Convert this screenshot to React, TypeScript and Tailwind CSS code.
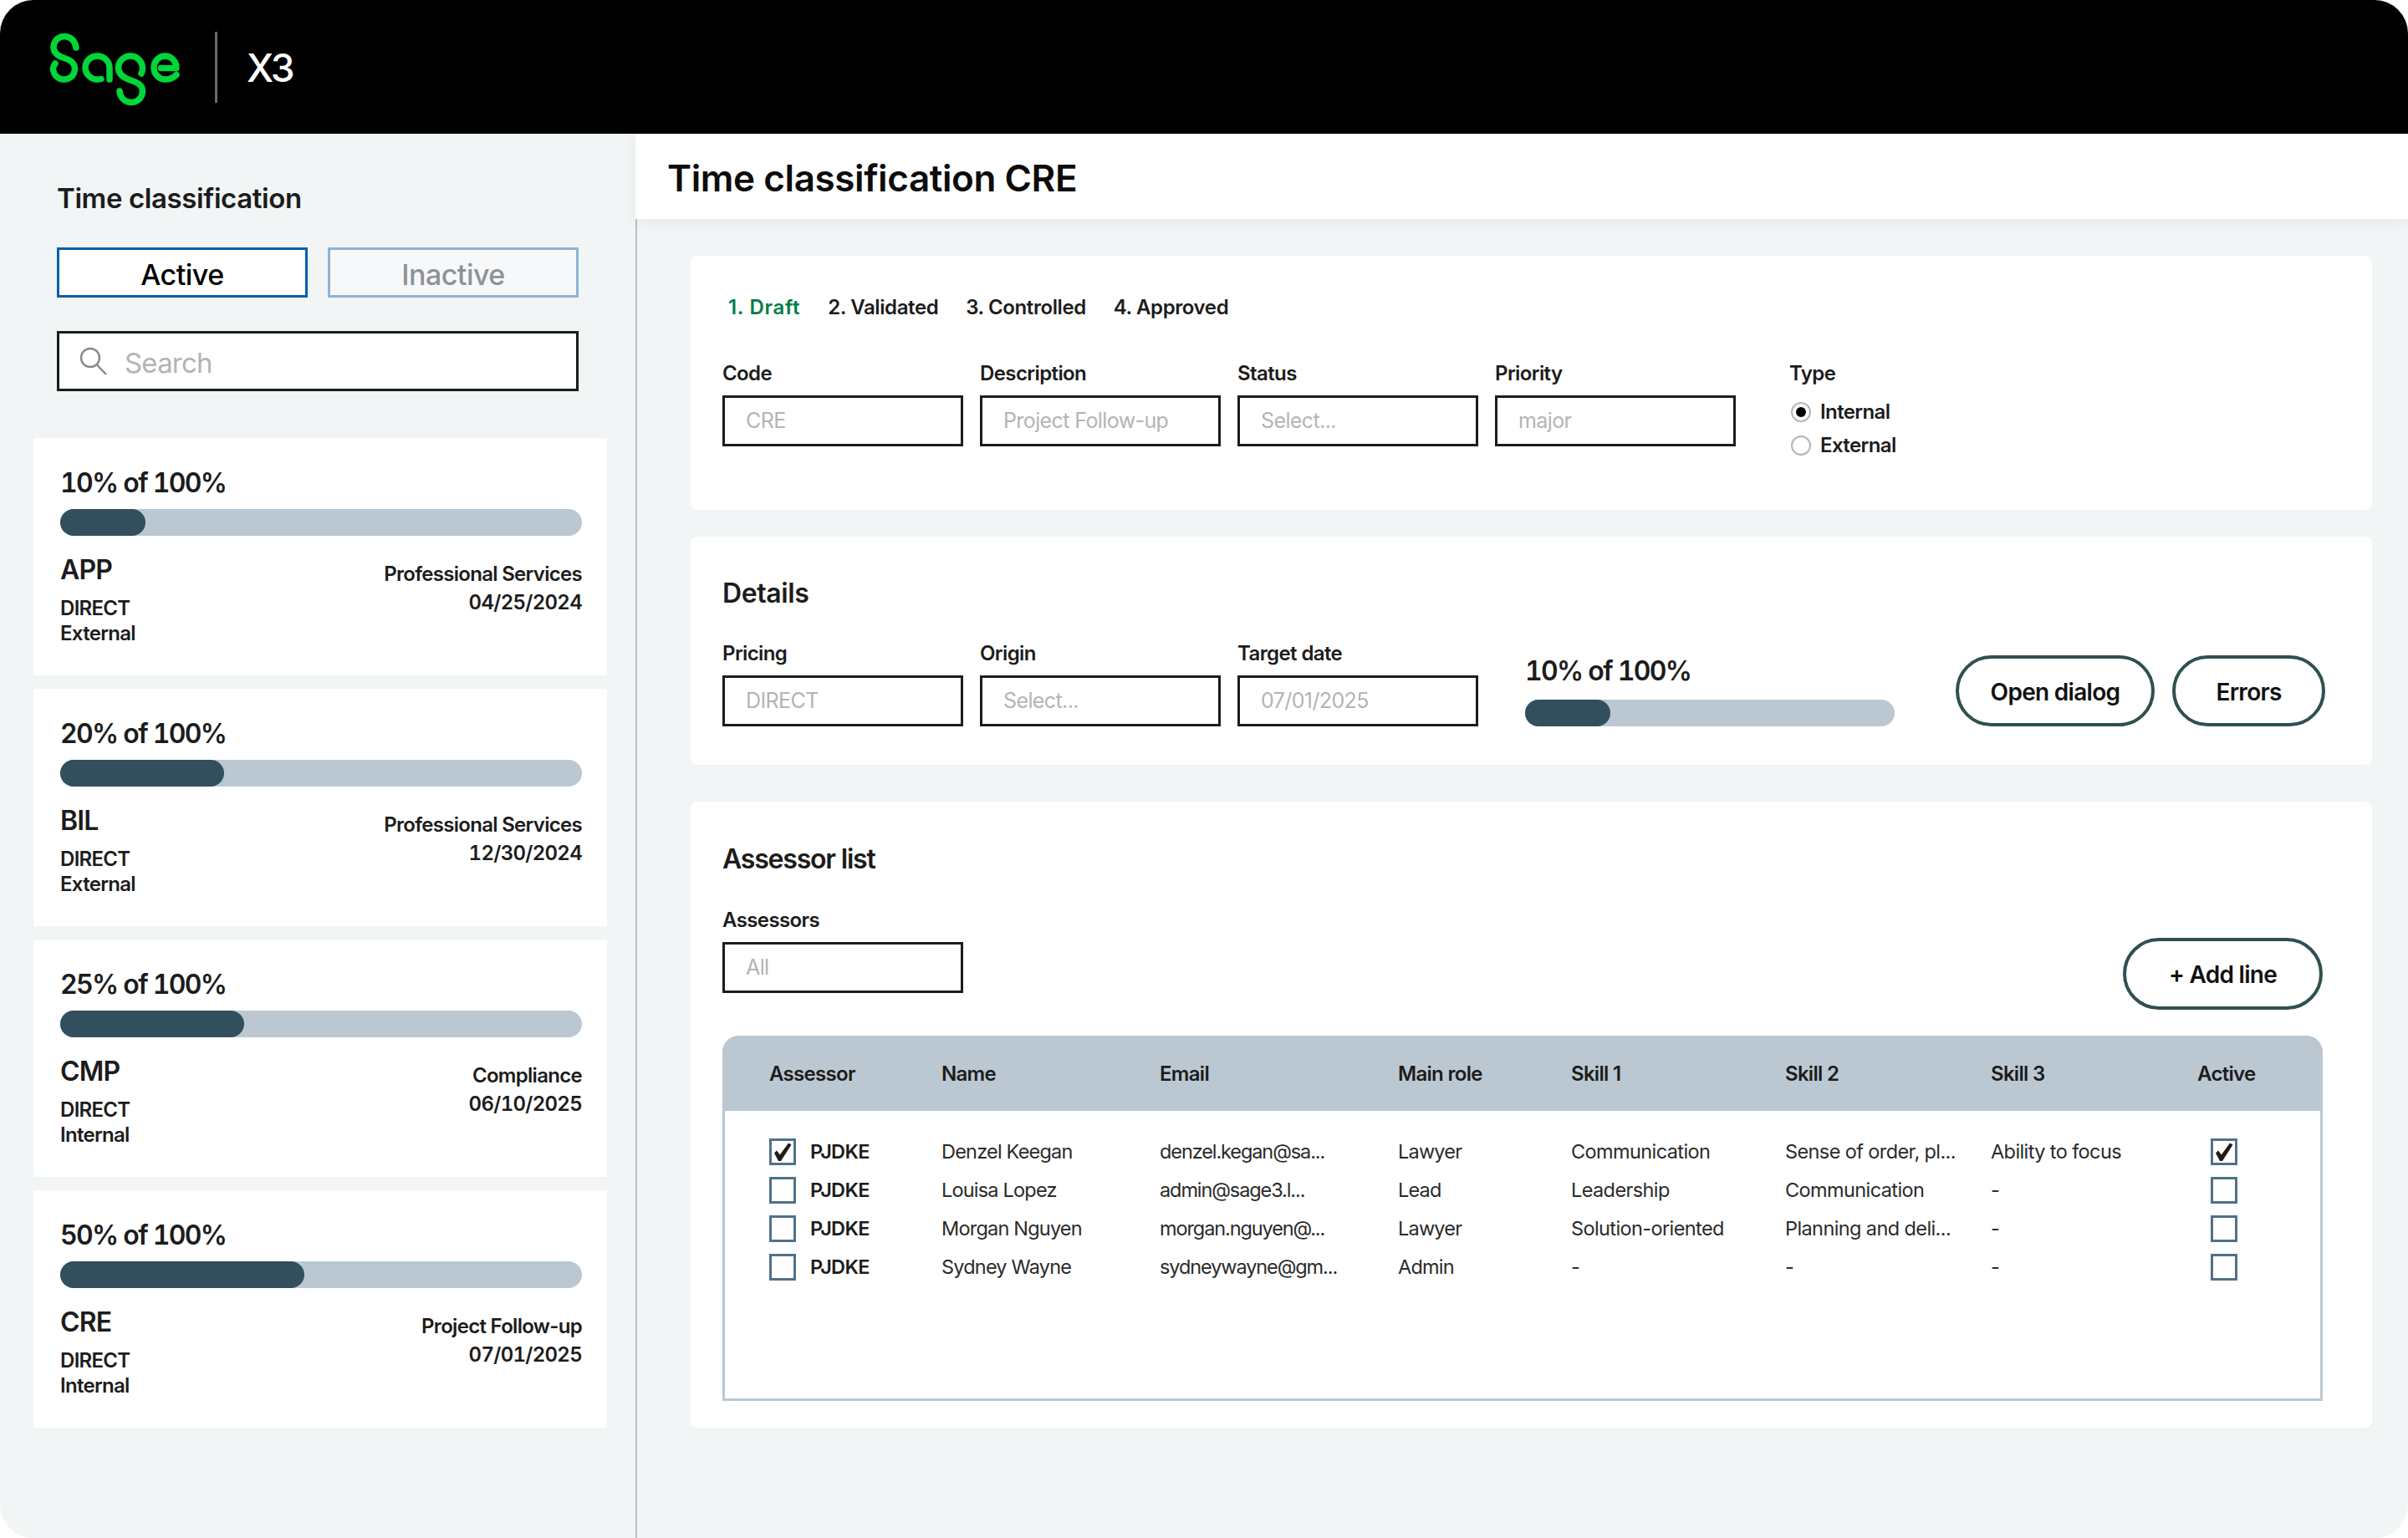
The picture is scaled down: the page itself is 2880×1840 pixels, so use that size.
import React from "react";

function Bar({ width, track }: { width: number; track: string }) {
  return (
    <div className={`h-[32px] rounded-full bg-[#bbc8d2] ${track}`}>
      <div className="h-full rounded-full bg-[#324f5e]" style={{ width }} />
    </div>
  );
}

function Card({ pct, fill, code, pricing, type, area, date }: { pct: string; fill: number; code: string; pricing: string; type: string; area: string; date: string }) {
  return (
    <div className="h-[284px] bg-white pl-[32px] pr-[30px] pt-[34px]">
      <div className="text-[32px] font-semibold leading-[40px] tracking-[-1.7px] tabular-nums text-[#1c1c1c]">{pct}</div>
      <Bar width={fill} track="mt-[11px] w-[624px]" />
      <div className="mt-[21px] flex justify-between">
        <div>
          <div className="text-[32px] font-semibold leading-[40px] tracking-[-0.8px] text-[#1c1c1c]">{code}</div>
          <div className="mt-[11px] text-[24px] font-semibold leading-[30px] tracking-[-0.7px] text-[#1c1c1c]">{pricing}</div>
          <div className="text-[24px] font-semibold leading-[30px] tracking-[-0.7px] text-[#1c1c1c]">{type}</div>
        </div>
        <div className="pt-[8px] text-right text-[24px] font-semibold leading-[34px] tracking-[-0.7px] text-[#1c1c1c]">
          <div>{area}</div>
          <div className="tabular-nums">{date}</div>
        </div>
      </div>
    </div>
  );
}

function Field({ label, value }: { label: string; value: string }) {
  return (
    <div className="w-[288px]">
      <div className="text-[24px] font-semibold leading-[28px] tracking-[-0.6px] text-[#1c1c1c]">{label}</div>
      <div className="mt-[12px] flex h-[61px] items-center border-[3px] border-[#1c1c1c] bg-white pl-[25px] text-[25px] leading-none tracking-[-0.6px] text-[#b4b4b4]">{value}</div>
    </div>
  );
}

function Pill({ children, className = "" }: { children: React.ReactNode; className?: string }) {
  return (
    <div className={`flex items-center justify-center rounded-full border-[4px] border-[#30504f] bg-white pt-[2px] text-[28px] font-semibold tracking-[-0.7px] text-[#111] ${className}`}>{children}</div>
  );
}

function Check({ on }: { on: boolean }) {
  return (
    <div className="flex h-[32px] w-[32px] items-center justify-center border-[3px] border-[#4f7287] bg-white">
      {on && (
        <svg viewBox="0 0 26 26" className="h-[26px] w-[26px]">
          <path d="M3 14.500 L6 11.500 L9.800 16.500 L20 2.500 L23.500 4.500 L11 24 L8 24 Z" fill="#1c1c1c" />
        </svg>
      )}
    </div>
  );
}

const rows = [
  ["Denzel Keegan", "denzel.kegan@sa...", "Lawyer", "Communication", "Sense of order, pl...", "Ability to focus", true],
  ["Louisa Lopez", "admin@sage3.l...", "Lead", "Leadership", "Communication", "-", false],
  ["Morgan Nguyen", "morgan.nguyen@...", "Lawyer", "Solution-oriented", "Planning and deli...", "-", false],
  ["Sydney Wayne", "sydneywayne@gm...", "Admin", "-", "-", "-", false],
] as const;

const cols = "grid grid-cols-[206px_261px_285px_207px_256px_246px_247px_1fr] items-center";

export default function App() {
  return (
    <div className="h-[1840px] w-[2880px] bg-white font-['Inter',sans-serif]">
      <div className="flex h-full w-full flex-col overflow-hidden rounded-[40px] bg-[#f1f5f6]">
        <header className="flex h-[160px] shrink-0 items-center bg-black pl-[55px]">
          <svg viewBox="0 0 165 95" className="mt-[5px] h-[95px] w-[165px] shrink-0" fill="none" stroke="#00d639" strokeWidth="7.500" strokeLinecap="round" strokeLinejoin="round">
            <path d="M36 22 C35 14 29.500 8.500 22 8.500 C14.500 8.500 9 14.500 9 21.500 C9 28.500 14 32 22 34.500 C30 37 34.500 40.500 34.500 47 C34.500 54.500 29 60 21.500 60 C14 60 8.500 54 8.500 47 C8.500 45 9.500 43 11 41" />
            <path d="M66 59.500 C64.500 60 63 60 61.500 60 C53.500 60 47 53.500 47 46 C47 38 53.500 32 61.500 32 C69.500 32 76 38.500 76 46 L76 60" />
            <path d="M114 53 C115 51 115.500 49 115.500 47 C115.500 38.500 109 32 101 32 C93 32 86.500 38.500 86.500 46 C86.500 53 91.500 57.500 100 60.500 C109 63.500 115.500 66.500 115.500 74 C115.500 81.500 109.500 87.500 102 87.500 C94.500 87.500 88.500 81.500 88 74" />
            <path d="M137.500 46.500 L156 46.500 C156 38.500 150 32 142.500 32 C135 32 129 38.500 129 46 C129 53.500 135 60 143 60 C148 60 152.500 58 156 54.500" />
          </svg>
          <div className="ml-[37px] h-[85px] w-[3px] bg-[#6b6b6b]" />
          <div className="ml-[35px] mt-[2px] text-[46px] font-medium leading-none tracking-[-2.500px] text-white">X3</div>
        </header>
        <div className="flex min-h-0 flex-1">
          <aside className="w-[760px] shrink-0">
            <div className="pl-[68px] pr-[68px]">
              <div className="pt-[59px] text-[33px] font-semibold leading-[36px] tracking-[-0.4px] text-[#1c1c1c]">Time classification</div>
              <div className="mt-[41px] flex gap-[24px]">
                <div className="flex h-[60px] w-[300px] items-center justify-center border-[3px] border-[#0060a7] bg-white pt-[4px] text-[34px] font-medium tracking-[-0.5px] text-black">Active</div>
                <div className="flex h-[60px] w-[300px] items-center justify-center border-[3px] border-[#8fb3d3] bg-[#f6f8fa] pt-[4px] text-[34px] font-medium tracking-[-0.5px] text-[#8e9295]">Inactive</div>
              </div>
              <div className="mt-[40px] flex h-[72px] w-[624px] items-center border-[3px] border-[#1c1c1c] bg-white pl-[24px]">
                <svg viewBox="0 0 34 34" className="h-[34px] w-[34px]" fill="none" stroke="#8a8a8a" strokeWidth="2.500">
                  <circle cx="13" cy="13" r="11" />
                  <path d="M20.500 21 L32 33" />
                </svg>
                <span className="ml-[20px] pt-[4px] text-[33px] leading-none tracking-[-0.8px] text-[#b4b4b4]">Search</span>
              </div>
            </div>
            <div className="ml-[40px] mt-[56px] flex w-[686px] flex-col gap-[16px]">
              <Card pct="10% of 100%" fill={102} code="APP" pricing="DIRECT" type="External" area="Professional Services" date="04/25/2024" />
              <Card pct="20% of 100%" fill={196} code="BIL" pricing="DIRECT" type="External" area="Professional Services" date="12/30/2024" />
              <Card pct="25% of 100%" fill={220} code="CMP" pricing="DIRECT" type="Internal" area="Compliance" date="06/10/2025" />
              <Card pct="50% of 100%" fill={292} code="CRE" pricing="DIRECT" type="Internal" area="Project Follow-up" date="07/01/2025" />
            </div>
          </aside>
          <main className="flex min-w-0 flex-1 flex-col border-l-[2px] border-[#b9bfc3]">
            <div className="relative z-10 -ml-[2px] flex h-[102px] shrink-0 items-center bg-white pl-[38px] pt-[4px] text-[44px] font-semibold tracking-[-0.4px] text-[#0c0c0c] shadow-[0_4px_16px_rgba(0,0,0,0.06)]">Time classification CRE</div>
            <div className="flex flex-col pl-[64px] pr-[43px] pt-[44px]">
              <section className="h-[304px] rounded-[8px] bg-white pl-[38px] pt-[48px]">
                <div className="flex gap-[33px] pl-[7px] text-[24px] font-semibold leading-[28px] tracking-[-0.4px] text-[#1c1c1c]">
                  <span className="tracking-[0.7px] text-[#007e45]">1. Draft</span>
                  <span>2. Validated</span>
                  <span>3. Controlled</span>
                  <span>4. Approved</span>
                </div>
                <div className="mt-[51px] flex">
                  <div className="flex gap-[20px]">
                    <Field label="Code" value="CRE" />
                    <Field label="Description" value="Project Follow-up" />
                    <Field label="Status" value="Select..." />
                    <Field label="Priority" value="major" />
                  </div>
                  <div className="ml-[64px]">
                    <div className="text-[24px] font-semibold leading-[28px] tracking-[-0.6px] text-[#1c1c1c]">Type</div>
                    <div className="mt-[20px] flex flex-col gap-[16px] pl-[2px] text-[24px] font-semibold leading-[24px] tracking-[-0.6px] text-[#1c1c1c]">
                      <div className="flex items-center gap-[11px]">
                        <span className="flex h-[24px] w-[24px] items-center justify-center rounded-full border-[2px] border-[#b5b5b5]"><span className="h-[12px] w-[12px] rounded-full bg-black" /></span>
                        Internal
                      </div>
                      <div className="flex items-center gap-[11px]">
                        <span className="h-[24px] w-[24px] rounded-full border-[2px] border-[#b5b5b5]" />
                        External
                      </div>
                    </div>
                  </div>
                </div>
              </section>
              <section className="mt-[32px] h-[273px] rounded-[8px] bg-white pl-[38px] pt-[48px]">
                <div className="text-[32px] font-semibold leading-[40px] tracking-[-0.4px] text-[#1c1c1c]">Details</div>
                <div className="mt-[38px] flex items-end">
                  <div className="flex gap-[20px]">
                    <Field label="Pricing" value="DIRECT" />
                    <Field label="Origin" value="Select..." />
                    <Field label="Target date" value="07/01/2025" />
                  </div>
                  <div className="ml-[56px] w-[442px]">
                    <div className="text-[32px] font-semibold leading-[40px] tracking-[-1.7px] tabular-nums text-[#1c1c1c]">10% of 100%</div>
                    <Bar width={102} track="mt-[14px] w-[442px]" />
                  </div>
                  <Pill className="ml-[73px] h-[85px] w-[238px]">Open dialog</Pill>
                  <Pill className="ml-[21px] h-[85px] w-[183px]">Errors</Pill>
                </div>
              </section>
              <section className="mt-[44px] h-[749px] rounded-[8px] bg-white pl-[38px] pr-[59px] pt-[49px]">
                <div className="text-[32px] font-semibold leading-[40px] tracking-[-1.2px] text-[#1c1c1c]">Assessor list</div>
                <div className="mt-[39px] flex items-start justify-between">
                  <Field label="Assessors" value="All" />
                  <Pill className="mt-[35px] h-[86px] w-[239px]">+ Add line</Pill>
                </div>
                <div className="mt-[31px] h-[437px] rounded-t-[20px] border-[3px] border-t-0 border-[#bbc8d2]">
                  <div className={`${cols} -mx-[3px] h-[90px] rounded-t-[20px] bg-[#bbc8d2] pl-[56px] pt-[2px] text-[24px] font-semibold tracking-[-0.7px] text-[#1c1c1c]`}>
                    <span>Assessor</span>
                    <span>Name</span>
                    <span>Email</span>
                    <span>Main role</span>
                    <span>Skill 1</span>
                    <span>Skill 2</span>
                    <span>Skill 3</span>
                    <span>Active</span>
                  </div>
                  <div className="pl-[53px] pt-[26px] text-[23.5px] tracking-[-0.8px] text-[#2a2a2a]">
                    {rows.map((r) => (
                      <div key={r[0]} className={`${cols} h-[46px]`}>
                        <div className="flex items-center gap-[17px]">
                          <Check on={r[6]} />
                          <span className="font-semibold tracking-[-0.7px] text-[#1c1c1c]">PJDKE</span>
                        </div>
                        <span>{r[0]}</span>
                        <span className="tracking-[-1.1px]">{r[1]}</span>
                        <span>{r[2]}</span>
                        <span className="tracking-[-0.6px]">{r[3]}</span>
                        <span className="tracking-[-0.6px]">{r[4]}</span>
                        <span className="tracking-[-0.6px]">{r[5]}</span>
                        <div className="pl-[16px]"><Check on={r[6]} /></div>
                      </div>
                    ))}
                  </div>
                </div>
              </section>
            </div>
          </main>
        </div>
      </div>
    </div>
  );
}
